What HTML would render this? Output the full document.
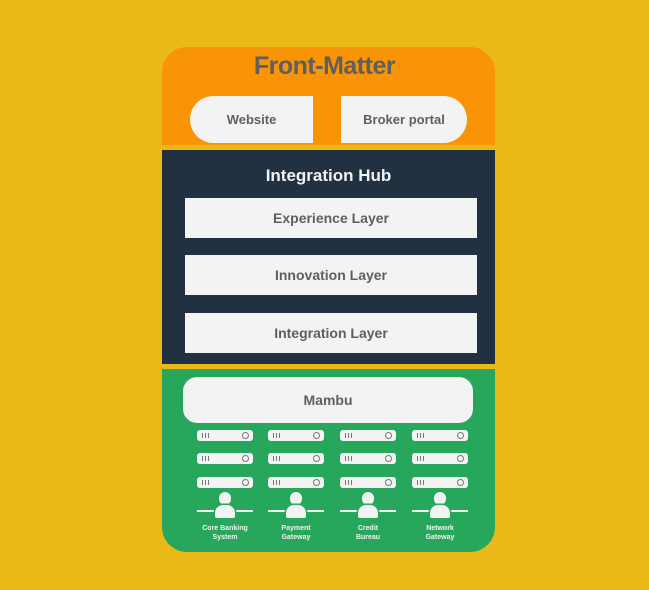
<!DOCTYPE html><html><head><style>
body{margin:0;width:649px;height:590px;background:#EBB917;position:relative;font-family:"Liberation Sans",sans-serif;overflow:hidden}
.a{position:absolute}
.t{color:#5f5f5f;font-weight:bold;text-align:center}
.srv{position:absolute;width:56px;height:11px;background:#f3f3f3;border-radius:3px}
.srv i{position:absolute;top:3px;width:1.3px;height:5px;background:#777}
.srv:after{content:"";position:absolute;right:4px;top:2px;width:5px;height:5px;border:1.3px solid #777;border-radius:50%}
.lbl{position:absolute;color:#f3f3f3;font-size:7px;font-weight:bold;text-align:center;width:70px;line-height:9px}
</style></head><body>
<div class="a" style="left:162px;top:47px;width:333px;height:98px;background:#F99406;border-radius:25px 25px 0 0"></div>
<div class="a t" style="left:158px;top:52px;width:333px;font-size:25px;letter-spacing:-0.5px">Front-Matter</div>
<div class="a t" style="left:190px;top:96px;width:123px;height:47px;background:#f3f3f3;border-radius:24px 0 0 24px;line-height:47px;font-size:13px">Website</div>
<div class="a t" style="left:341px;top:96px;width:126px;height:47px;background:#f3f3f3;border-radius:0 24px 24px 0;line-height:47px;font-size:13px">Broker portal</div>
<div class="a" style="left:162px;top:150px;width:333px;height:214px;background:#223142"></div>
<div class="a t" style="left:162px;top:166px;width:333px;font-size:17px;color:#f3f3f3">Integration Hub</div>
<div class="a t" style="left:185px;top:198px;width:292px;height:40px;background:#f3f3f3;line-height:40px;font-size:14px">Experience Layer</div>
<div class="a t" style="left:185px;top:255px;width:292px;height:40px;background:#f3f3f3;line-height:40px;font-size:14px">Innovation Layer</div>
<div class="a t" style="left:185px;top:313px;width:292px;height:40px;background:#f3f3f3;line-height:40px;font-size:14px">Integration Layer</div>
<div class="a" style="left:162px;top:369px;width:333px;height:183px;background:#27A75B;border-radius:0 0 25px 25px"></div>
<div class="a t" style="left:183px;top:377px;width:290px;height:46px;background:#f3f3f3;border-radius:14px;line-height:46px;font-size:14px">Mambu</div>
<div id="g"></div>
<script>
var xs=[197,268,340,412],ys=[430,453,477],names=["Core Banking<br>System","Payment<br>Gateway","Credit<br>Bureau","Network<br>Gateway"],h="";
xs.forEach(function(x,i){ys.forEach(function(y){h+='<div class="srv" style="left:'+x+'px;top:'+y+'px"><i style="left:5px"></i><i style="left:8px"></i><i style="left:11px"></i></div>'});
var c=x+28;
h+='<div class="a" style="left:'+(c-28)+'px;top:510px;width:56px;height:1.5px;background:#f3f3f3"></div>';
h+='<div class="a" style="left:'+(c-6)+'px;top:492px;width:12px;height:13px;background:#f3f3f3;border-radius:6px;box-shadow:0 0 0 1.5px #27A75B"></div>';
h+='<div class="a" style="left:'+(c-10)+'px;top:505px;width:20px;height:13px;background:#f3f3f3;border-radius:8px 8px 2px 2px;box-shadow:0 0 0 1.5px #27A75B"></div>';
h+='<div class="lbl" style="left:'+(c-35)+'px;top:524px">'+names[i]+'</div>';});
document.getElementById("g").innerHTML=h;
</script>
</body></html>
